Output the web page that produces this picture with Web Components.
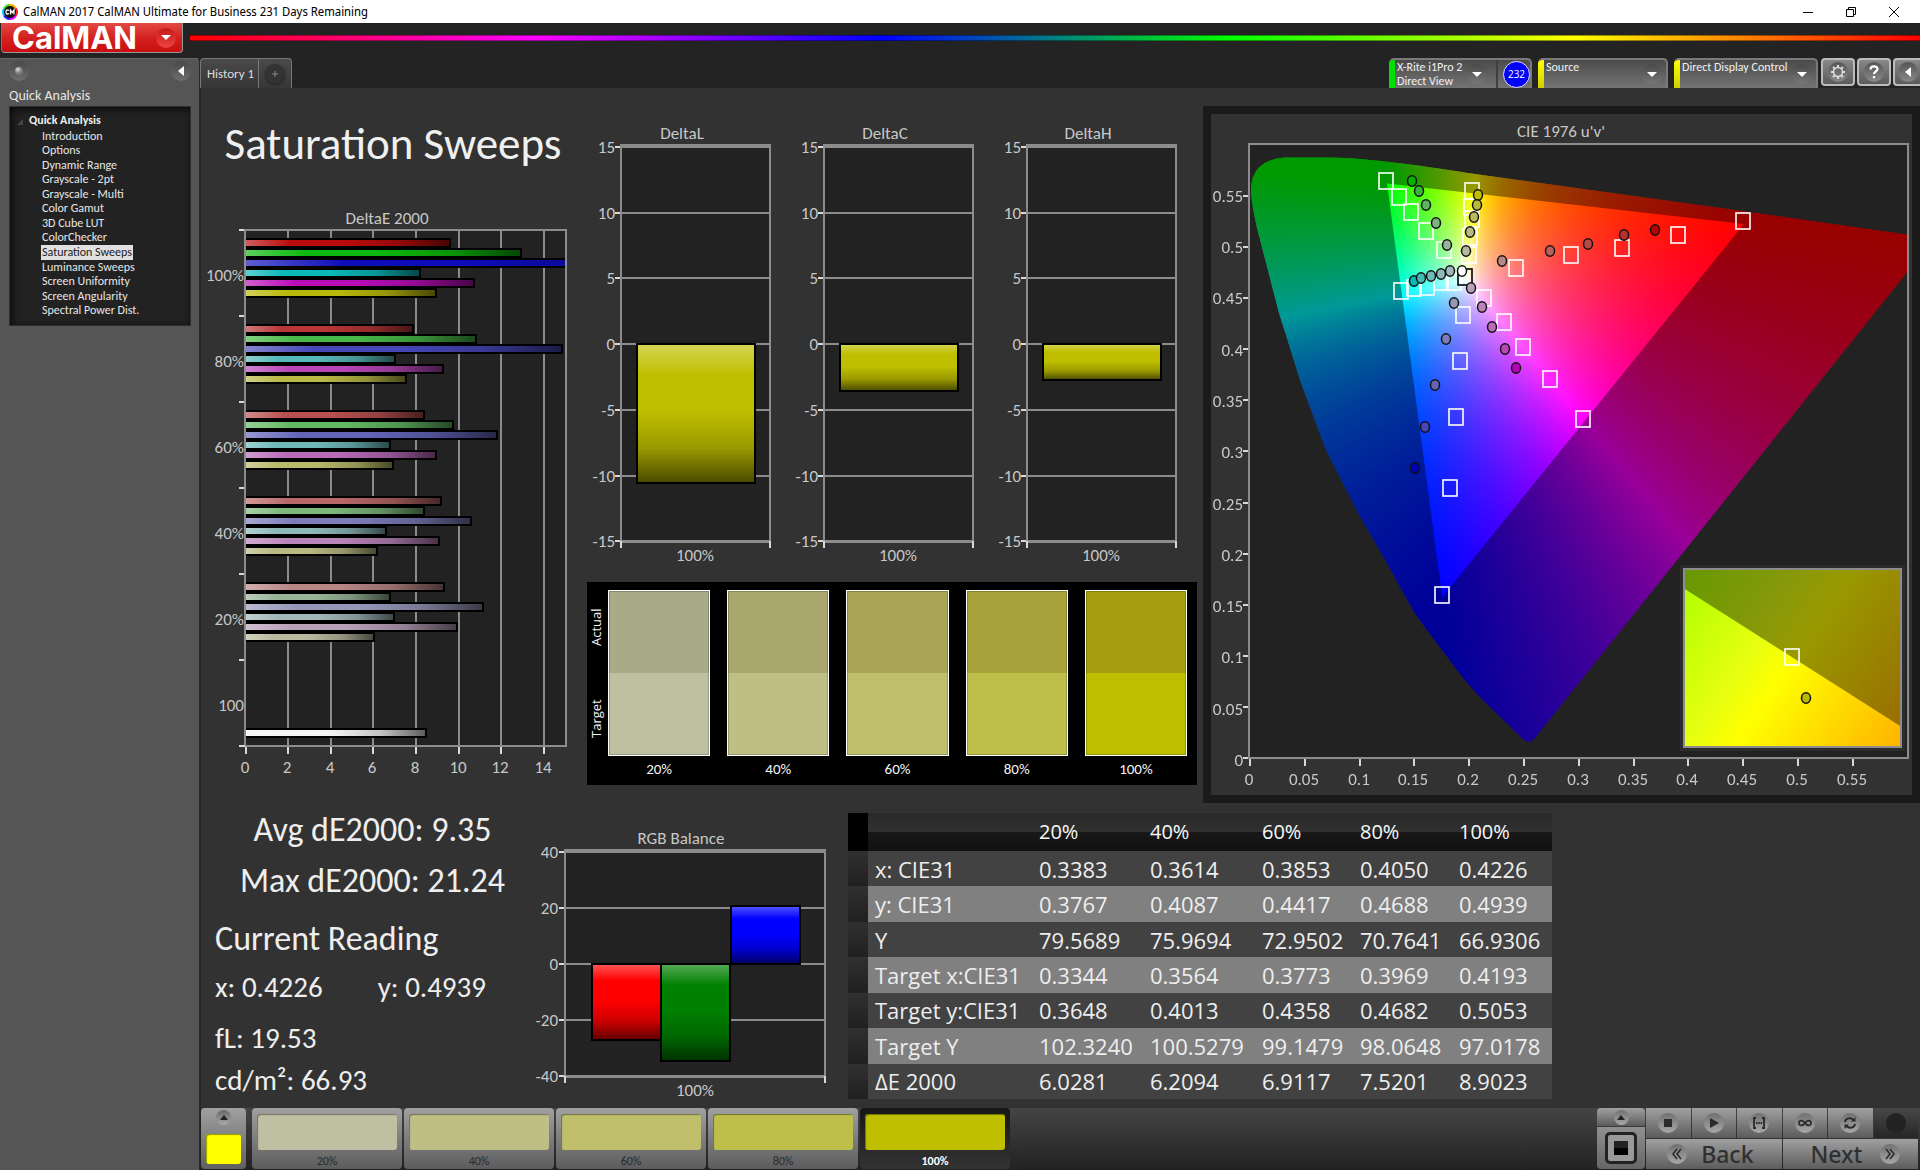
<!DOCTYPE html>
<html lang="en">
<head>
<meta charset="utf-8">
<title>CalMAN 2017 CalMAN Ultimate for Business</title>
<style>
html, body { margin: 0; height: 100%; background: #232323; }
body { font-family: Carlito, Calibri, Lato, sans-serif; color: #e6e6e6; overflow: hidden; }
</style>
</head>
<body>
<calman-app></calman-app>
<script>
const HUM = 'Carlito, Calibri, Lato, sans-serif';
const UI = '"Open Sans", "Noto Sans", sans-serif';
const RESET = `*{box-sizing:border-box} button{font:inherit;color:inherit;border:0;margin:0;padding:0;cursor:pointer;text-align:left} a{color:inherit;text-decoration:none}`;
const define = (name, render, after) => customElements.define(name, class extends HTMLElement {
  connectedCallback() {
    if (this.shadowRoot) return;
    const root = this.attachShadow({ mode: 'open' });
    const t = document.createElement('template');
    const out = render(this);
    t.innerHTML = `<style>${RESET}${out.css}</style>${out.html}`;
    root.append(t.content.cloneNode(true));
    if (after) after(root, this);
  }
});

/* ---------- window title ---------- */
define('window-title', () => ({
  css: `:host{display:flex;align-items:center;height:23px;background:#fff;color:#000;font:12px "Noto Sans Display",${UI};padding-left:2px}
  h1{font:inherit;margin:0 0 0 5px;flex:1}
  button{background:none;width:43px;height:23px;display:grid;place-items:center} button:last-of-type{margin-right:5px}`,
  html: `<svg width="16" height="16" viewBox="0 0 16 16"><circle cx="8" cy="8" r="7" fill="#111"/>
    <g fill="none" stroke-width="2"><path d="M8 1a7 7 0 0 1 6 3.500" stroke="#fa0"/><path d="M14 4.500a7 7 0 0 1 0 7" stroke="#f22"/><path d="M14 11.500a7 7 0 0 1-6 3.500" stroke="#e0f"/><path d="M8 15a7 7 0 0 1-6-3.500" stroke="#22f"/><path d="M2 11.500a7 7 0 0 1 0-7" stroke="#0cf"/><path d="M2 4.500A7 7 0 0 1 8 1" stroke="#4d2"/></g>
    <path d="M7 6.500Q4 5 4 8t3 1.500M8.500 10.500V6l1.700 2.500L12 6v4.500" fill="none" stroke="#fff" stroke-width="1.300"/></svg>
  <h1>CalMAN 2017 CalMAN Ultimate for Business 231 Days Remaining</h1>
  <button aria-label="Minimize"><svg width="12" height="12"><path d="M1 6.500h10" stroke="#000"/></svg></button>
  <button aria-label="Restore"><svg width="12" height="12" fill="none" stroke="#000"><path d="M1.500 3.500h7v7h-7zM3.500 3V1.500h7v7H9"/></svg></button>
  <button aria-label="Close"><svg width="12" height="12" fill="none" stroke="#000"><path d="M1 1l10 10M11 1L1 11"/></svg></button>`
}));

/* ---------- brand strip ---------- */
define('brand-strip', () => ({
  css: `:host{display:flex;height:35px;background:#232323}
  .logo{display:flex;align-items:center;width:182px;height:30px;margin-left:1px;padding:0 6px 0 10px;background:linear-gradient(#e34a45,#d4211f 50%,#c80f0f);border:1px solid #999;border-top:0;border-left-color:#777;border-radius:0 0 4px 4px;color:#fff}
  b{flex:1;font:700 31px/28px Inter,sans-serif}
  i{display:grid;place-items:center;width:20px;height:20px;border-radius:50%;background:linear-gradient(#c41a1a,#e44)}
  .line{flex:1;height:6px;margin:12px 0 0 7px;background:linear-gradient(90deg,#f00,#f0f 20%,#00f 40%,#0f0 60%,#ff0 80%,#f00);border-top:1px solid #0006;border-bottom:1px solid #0006}`,
  html: `<button class="logo"><b>CalMAN</b><i><svg width="10" height="5"><path d="M0 0h10L5 5z" fill="#fff"/></svg></i></button><div class="line"></div>`
}));

/* ---------- workflow tree ---------- */
const PAGES = ['Introduction','Options','Dynamic Range','Grayscale - 2pt','Grayscale - Multi','Color Gamut','3D Cube LUT','ColorChecker','Saturation Sweeps','Luminance Sweeps','Screen Uniformity','Screen Angularity','Spectral Power Dist.'];
define('workflow-panel', () => ({
  css: `:host{display:block;width:200px;background:#555;border-top:1px solid #666;border-right:1px solid #2a2a2a;border-radius:0 4px 0 0;padding:2px 8px 0 9px}
  .top{display:flex;justify-content:space-between;height:22px}
  .top button{width:20px;height:20px;border-radius:50%;background:linear-gradient(#484848,#6e6e6e);display:grid;place-items:center}
  h2{font:14px/20px ${HUM};margin:3px 0 0;height:20px}
  nav{height:220px;background:#222;border:1px solid #2f2f2f;box-shadow:inset 2px 2px 8px #000b;padding:6px 0 7px 19px;font-size:12px;display:flex;flex-direction:column}
  strong{line-height:15px;height:16px;position:relative;color:#f0f0f0}
  strong svg{position:absolute;left:-12px;top:6px}
  ul{list-style:none;margin:0;padding:0 0 0 12px;flex:1;min-height:0;display:flex;flex-direction:column}
  li{flex:1;display:flex;align-items:center;min-height:0}
  a{padding:0 1px;line-height:15px} a.on{background:#e0e0e0;color:#222}`,
  html: `<div class="top"><button aria-label="Pin"><svg width="10" height="10"><defs><radialGradient id="g" cx=".35" cy=".3"><stop stop-color="#ddd"/><stop offset="1" stop-color="#777"/></radialGradient></defs><circle cx="5" cy="5" r="4" fill="url(#g)"/></svg></button>
  <button aria-label="Collapse"><svg width="6" height="10"><path d="M6 0v10L0 5z" fill="#fff"/></svg></button></div>
  <h2>Quick Analysis</h2>
  <nav><strong><svg width="6" height="6"><path d="M6 0v6H0z" fill="#444"/></svg>Quick Analysis</strong><ul>${PAGES.map(p => `<li><a href="#" ${p === 'Saturation Sweeps' ? 'class="on" aria-current="page"' : ''}>${p}</a></li>`).join('')}</ul></nav>`
}));

/* ---------- tabs and device bar ---------- */
define('device-button', el => {
  const count = el.getAttribute('count');
  return {
  css: `:host{display:flex;height:30px}
  .b{flex:1;display:flex;background:linear-gradient(#4b4b4b,#747474);border:2px solid #7a7a7a;border-bottom:0;border-left:0;border-radius:5px 5px 0 0;overflow:hidden;font:12px/14px ${HUM};color:#f0f0f0}
  .b::before{content:"";width:6px;background:${el.getAttribute('tone')}}
  .t{flex:1;padding-left:2px;white-space:nowrap}
  i{align-self:center;width:20px;height:20px;margin:0 ${count ? 9 : 4}px 0 0;border-radius:50%;background:linear-gradient(#484848,#787878);display:grid;place-items:center}
  .n{display:grid;align-items:center;justify-items:end;width:34px;border-left:2px solid #404040}
  .n span{display:grid;place-items:center;width:27px;height:27px;border-radius:50%;background:#00f;border:1px solid #ddf;font:10px/12px ${UI};color:#fff}
  ::slotted(*){display:block}`,
  html: `<button class="b" aria-haspopup="menu"><span class="t"><slot></slot></span><i><svg width="10" height="5"><path d="M0 0h10L5 5z" fill="#fff"/></svg></i>${count ? `<span class="n"><span>${count}</span></span>` : ''}</button>`
}; });
define('tab-bar', () => ({
  css: `:host{display:flex;height:30px;background:#232323}
  .tab,.add{height:30px;background:linear-gradient(#4a4a4a,#363636);border:1px solid #777;border-bottom:0;font-size:13px;color:#ddd}
  .tab{width:59px;border-radius:4px 0 0 0;padding-left:6px}
  .add{width:33px;border-left:0;border-radius:0 4px 0 0;display:grid;place-items:center}
  .add i{width:20px;height:20px;border-radius:50%;background:#333;display:grid;place-items:center;box-shadow:0 1px 2px #222}
  .gap{flex:1}
  device-button{margin-right:6px}
  .sq{width:34px;height:28px;margin-left:2px;border:2px solid #bbb;border-radius:4px;background:linear-gradient(#888,#5b5b5b);display:grid;place-items:center}
  .sq i{width:20px;height:20px;border-radius:50%;background:linear-gradient(#555,#8a8a8a);display:grid;place-items:center}
  .last{width:27px;border-right:0;border-radius:4px 0 0 4px}`,
  html: `<button class="tab">History 1</button><button class="add" aria-label="New history"><i><svg width="8" height="8"><path d="M4 1v6M1 4h6" stroke="#888"/></svg></i></button><div class="gap"></div>
  <device-button tone="#00e000" count="232" style="width:143px"><span>X-Rite i1Pro 2</span><span>Direct View</span></device-button>
  <device-button tone="linear-gradient(#ff0,#d0d000)" style="width:130px"><span>Source</span></device-button>
  <device-button tone="linear-gradient(#ff0,#d0d000)" style="width:144px;margin-right:1px"><span>Direct Display Control</span></device-button>
  <button class="sq" aria-label="Settings"><i><svg width="16" height="16" viewBox="0 0 16 16" fill="none" stroke="#ddd"><circle cx="8" cy="8" r="4.500" stroke-width="1.500"/><g stroke-width="2"><path d="M8 1v2M8 13v2M1 8h2M13 8h2M3 3l1.500 1.500M11.500 11.500L13 13M13 3l-1.500 1.500M4.500 11.500L3 13"/></g></svg></i></button>
  <button class="sq" aria-label="Help"><i><svg width="12" height="14" viewBox="0 0 12 14"><path d="M2.500 4.500C2.500 0.500 9.500 0.500 9.500 4c0 2.500-3.500 2.500-3.500 5M6 11v2.200" fill="none" stroke="#fff" stroke-width="2.200"/></svg></i></button>
  <button class="sq last" aria-label="Expand"><i><svg width="6" height="10"><path d="M6 0v10L0 5z" fill="#fff"/></svg></i></button>`
}));

/* ---------- charts ---------- */
const SVG_CSS = `:host{display:block} svg{display:block;width:100%;height:auto} text{font-family:${HUM};font-size:17px;fill:#c8c8c8} .e{text-anchor:end} .m{text-anchor:middle}
 .ax{stroke:#8c8c8c;stroke-width:2;fill:none} .tk{stroke:#d8d8d8;stroke-width:2}`;
const shade = (id, dir) => `<linearGradient id="${id}" x1="0" y1="0" x2="${dir === 'h' ? 1 : 0}" y2="${dir === 'h' ? 0 : 1}"><stop stop-color="#fff" stop-opacity=".34"/><stop offset=".22" stop-color="#fff" stop-opacity="0"/><stop offset=".48" stop-color="#000" stop-opacity="0"/><stop offset=".75" stop-color="#000" stop-opacity=".2"/><stop offset="1" stop-color="#000" stop-opacity=".62"/></linearGradient>`;
const bar = (x, y, w, h, c, g) => `<rect x="${x}" y="${y}" width="${w}" height="${h}" fill="${c}"/><rect x="${x}" y="${y}" width="${w}" height="${h}" fill="url(#${g})" stroke="#000" stroke-width="2"/>`;

const SWEEPS = [
  ['100%', [9.6,12.9,21.24,8.15,10.7,8.9], ['#b90c0c','#0cb90c','#0c0cb9','#0cb9b9','#b90cb9','#b9b90c']],
  ['80%', [7.85,10.8,14.85,7,9.25,7.5], ['#b93636','#46b946','#4646b9','#56b9b9','#b946b9','#b9b946']],
  ['60%', [8.35,9.7,11.8,6.75,8.9,6.9], ['#b95050','#62b962','#6464b9','#70b9b9','#b96ab9','#b9b96a']],
  ['40%', [9.15,8.35,10.55,6.55,9.05,6.15], ['#b96868','#7cb97c','#7c7cb9','#8fb9b9','#b984b9','#b9b984']],
  ['20%', [9.3,6.75,11.15,6.95,9.9,6.03], ['#b98686','#98b498','#9696b9','#a2b9b9','#b9a0b9','#b9b9a0']],
  ['100', [0,0,0,0,0,0,8.45], ['','','','','','','#f4f4f4']]
];
define('delta-e-chart', () => {
  let s = '';
  for (let i = 2; i <= 14; i += 2) { const x = Math.round(245.5 + i * 21.3); s += `<path class="ax" d="M${x} 230V746"/>`; }
  for (let i = 0; i <= 14; i += 2) { const x = Math.round(245.5 + i * 21.3); s += `<path class="tk" d="M${x} 747v7"/><text class="m" x="${x - 1}" y="773">${i}</text>`; }
  SWEEPS.forEach(([name, vals, cols], g) => {
    const y = 230 + g * 86;
    s += `<path class="tk" d="M239 ${y}h6"/><text class="e" x="244" y="${y + 51}">${name}</text>`;
    vals.forEach((v, k) => { if (v) s += bar(245, y + 9 + k * 10, Math.round(v * 21.3) + 1, 8, cols[k], 'b'); });
  });
  return { css: SVG_CSS, html: `<svg viewBox="200 200 380 590" role="img" aria-label="DeltaE 2000"><defs>${shade('b', 'h')}<clipPath id="c"><rect x="200" y="220" width="366" height="570"/></clipPath></defs>
  <text class="m" x="387" y="224">DeltaE 2000</text><rect x="246" y="230" width="320" height="516" fill="#222"/><g clip-path="url(#c)">${s}</g><rect class="ax" x="245" y="230" width="321" height="516"/><path class="tk" d="M239 746h6"/></svg>` };
});

define('delta-chart', el => {
  const v = +el.getAttribute('value'), name = el.getAttribute('name');
  let s = '';
  for (let i = 15; i >= -15; i -= 5) { const y = Math.round(344 - i * 13.15); s += `<path class="ax" d="M41 ${y}H190"/><path class="tk" d="M35 ${y}h6"/><text class="e" x="35" y="${y + 6}">${i}</text>`; }
  return { css: SVG_CSS, html: `<svg viewBox="0 110 203 460" role="img" aria-label="${name}"><defs>${shade('b', 'v')}</defs>
  <text class="m" x="102" y="139">${name}</text><rect x="41" y="145" width="149" height="396" fill="#222"/>${s}<rect class="ax" x="41" y="145" width="149" height="397"/><path class="tk" d="M41 541v7M190 541v7"/>
  ${bar(57, 344, 118, Math.round(-v * 13.13), '#bfbf00', 'b')}<text class="m" x="115" y="561">100%</text></svg>` };
});

define('rgb-chart', () => {
  let s = '';
  for (let i = 40; i >= -40; i -= 20) { const y = 964 - i * 14 / 5; s += `<path class="ax" d="M565 ${y}H825"/><path class="tk" d="M559 ${y}h6"/><text class="e" x="558" y="${y + 6}">${i}</text>`; }
  return { css: SVG_CSS, html: `<svg viewBox="535 815 300 290" role="img" aria-label="RGB Balance"><defs>${shade('b', 'v')}</defs>
  <text class="m" x="681" y="844">RGB Balance</text><rect x="565" y="850" width="260" height="226" fill="#222"/>${s}<rect class="ax" x="565" y="850" width="260" height="227"/><path class="tk" d="M565 1076v7M825 1076v7"/>
  ${bar(592, 964, 69, 76, '#f00', 'b')}${bar(661, 964, 69, 97, '#008000', 'b')}${bar(731, 906, 69, 58, '#00f', 'b')}<text class="m" x="695" y="1096">100%</text></svg>` };
});

/* ---------- chromaticity diagram ---------- */
/* colour of every pixel for the window (u0, v0) top-left with kx, ky pixels per unit */
function chroma(w, h, u0, v0, kx, ky) {
  const c = document.createElement('canvas'); c.width = w; c.height = h;
  const g = c.getContext('2d'), im = g.createImageData(w, h), d = im.data;
  for (let j = 0, p = 0; j < h; j++) for (let i = 0; i < w; i++, p += 4) {
    const u = u0 + i / kx, v = Math.max(v0 - j / ky, 0.002);
    const X = 9 * u / (4 * v), Z = (12 - 3 * u - 20 * v) / (4 * v);
    const r = Math.max(0, 3.2406 * X - 1.5372 - .4986 * Z), gr = Math.max(0, -.9689 * X + 1.8758 + .0415 * Z), b = Math.max(0, .0557 * X - .204 + 1.057 * Z);
    const m = 255 / Math.max(r, gr, b, 1e-6);
    d[p] = r * m; d[p + 1] = gr * m; d[p + 2] = b * m; d[p + 3] = 255;
  }
  g.putImageData(im, 0, 0);
  return c;
}
/* yellow corner of the gamut for the magnified view */
function yellowField(w, h) {
  const c = document.createElement('canvas'); c.width = w; c.height = h;
  const g = c.getContext('2d'), l = g.createLinearGradient(0, 0, 232, 157);
  [[0, '#aaff00'], [.36, '#e6ff10'], [.5, '#ffff00'], [1, '#ffb200']].forEach(s => l.addColorStop(...s));
  g.fillStyle = l; g.fillRect(0, 0, w, h);
  return c;
}
const TARGETS = [[1386,181],[1399,197],[1411,212],[1426,231],[1444,250],[1472,191],[1471,207],[1472,219],[1470,237],[1469,255],[1516,268],[1571,255],[1622,248],[1678,235],[1743,221],[1401,291],[1414,288],[1427,287],[1441,282],[1454,282],[1484,298],[1504,322],[1523,347],[1550,379],[1583,419],[1463,315],[1460,361],[1456,417],[1450,488],[1442,595]];
const ACTUALS = [
  ['#00b400',1412,181],['#3cb43c',1419,191],['#5cb45c',1426,205],['#7cb47c',1436,223],['#98b498',1447,245],
  ['#bfbf00',1478,195],['#b9b93c',1477,205],['#b9b960',1474,217],['#b9b984',1470,232],['#b9b9a0',1466,251],
  ['#b98686',1502,261],['#b96060',1550,251],['#b94848',1588,244],['#b93030',1624,235],['#b90000',1655,230],
  ['#00b9b9',1414,281],['#46b9b9',1421,278],['#70b9b9',1431,276],['#8fb9b9',1441,274],['#a2b9b9',1450,271],['#ffffff',1462,271],
  ['#b9a0b9',1471,288],['#b984b9',1482,307],['#b96ab9',1492,327],['#b946b9',1505,349],['#b900b9',1516,368],
  ['#9696b9',1454,303],['#7c7cb9',1446,339],['#6464b9',1435,385],['#4646b9',1425,427],['#0000b9',1415,468]];
define('cie-chart', () => {
  let s = '';
  for (let i = 0; i <= 11; i++) {
    const t = String(i * 5 / 100), x = Math.round(1250 + i * 54.8), y = Math.round(758 - i * 51.1);
    s += `<path class="tk" d="M${x} 759v7M1243 ${y}h6"/><text class="m" x="${x - 1}" y="785">${t}</text><text class="e" x="1243" y="${Math.round(766 - i * 51.3)}">${t}</text>`;
  }
  const sq = (x, y, c) => `<rect x="${x - 7}" y="${y - 8}" width="14" height="16" fill="none" stroke="${c}" stroke-width="1.600"/>`;
  const dot = (c, x, y) => `<ellipse cx="${x}" cy="${y}" rx="4.500" ry="5.200" fill="${c}" stroke="#111" stroke-width="1.500"/>`;
  return { css: SVG_CSS + `:host{border:8px solid #1a1a1a;background:#323232}canvas{display:block}`, html: `<svg viewBox="1211 114 701 681" role="img" aria-label="CIE 1976 u'v'"><text class="m" x="1561" y="137">CIE 1976 u'v'</text>
  <foreignObject x="1250" y="144" width="658" height="614"><canvas class="big" width="658" height="614"></canvas></foreignObject>${s}
  <rect class="ax" x="1249" y="144" width="659" height="614"/>
  ${TARGETS.map(([x, y]) => sq(x, y, '#fff')).join('')}${sq(1465, 277, '#000')}${ACTUALS.map(a => dot(...a)).join('')}
  <rect x="1680" y="565" width="225" height="186" fill="#2c2c2c"/><foreignObject x="1684" y="569" width="217" height="178"><canvas class="zoom" width="217" height="178"></canvas></foreignObject>
  <rect class="ax" x="1684" y="569" width="217" height="178"/>${sq(1792, 657, '#fff')}${dot('#b9b900', 1806, 698)}</svg>` };
}, root => {
  const draw = (cv, img, locus, tri) => {
    const g = cv.getContext('2d');
    g.fillStyle = '#222'; g.fillRect(0, 0, cv.width, cv.height);
    g.save(); if (locus) g.clip(locus);
    g.drawImage(img, 0, 0); g.fillStyle = 'rgba(0,0,0,.4)'; g.fillRect(0, 0, cv.width, cv.height); g.restore();
    g.save(); g.clip(tri); g.drawImage(img, 0, 0); g.restore();
  };
  const locus = new Path2D('M1285 157.500H1330C1370 158 1430 167 1475 174L1728 209L1916 236V261L1534 739Q1529 744 1523 739L1485 702Q1463 680 1446 655Q1428 632 1414 612L1384 558L1358 513L1326 450L1301 383L1279 313L1257 228Q1252 206 1251 192Q1250 160 1285 157.500Z');
  const p = new Path2D(); p.addPath(locus, new DOMMatrix([1, 0, 0, 1, -1250, -144]));
  const prim = [[.4507, .5229], [.125, .5625], [.1754, .1579]];
  const tri = (u0, v0, kx, ky) => { const t = new Path2D(); prim.forEach(([u, v], i) => t[i ? 'lineTo' : 'moveTo']((u - u0) * kx, (v0 - v) * ky)); t.closePath(); return t; };
  const A = [0, .6012, 1096, 1022], B = [.1643, .5591, 2724, 14236];
  draw(root.querySelector('.big'), chroma(658, 614, ...A), p, tri(...A));
  draw(root.querySelector('.zoom'), yellowField(217, 178), null, tri(...B));
});

/* ---------- actual / target swatches ---------- */
define('swatch-panel', () => ({
  css: `:host{display:flex;background:#000;padding:8px 10px 0 2px;height:203px;color:#f4f4f4}
  .v{width:19px;height:166px;display:flex;flex-direction:column;justify-content:space-between;align-items:flex-start;font:500 13px/14px ${UI}}
  .v span{writing-mode:vertical-rl;transform:rotate(180deg);height:74px;text-align:center}
  .r{flex:1;display:flex;gap:17px} figure{flex:1;margin:0}
  .c{height:166px;border:1px solid #fff;outline:1px solid #0003;outline-offset:-2px}
  figcaption{text-align:center;font:15px/27px ${HUM}}`,
  html: `<div class="v"><span>Actual</span><span>Target</span></div><div class="r">${[['20%','#a7ab88','#bfbfa2'],['40%','#a9a76e','#bfbe85'],['60%','#a8a555','#bfbe6b'],['80%','#a8a33a','#bebf4b'],['100%','#a79d12','#bfbf00']].map(([n, a, t]) => `<figure><div class="c" style="background:linear-gradient(${a} 50%,${t} 50%)"></div><figcaption>${n}</figcaption></figure>`).join('')}</div>`
}));

/* ---------- readings ---------- */
define('reading-block', () => ({
  css: `:host{display:block;padding:1px 5px 0 15px;color:#eee;font-family:${HUM};white-space:nowrap}
  p,h3{margin:0;font-weight:400} .a{font-size:34px;line-height:51px;text-align:center} h3{font-size:34px;line-height:66px}
  .xy{display:flex;gap:55px} .s{font-size:29px;line-height:30px} .l{font-size:29px;line-height:42px} .xy+.l{margin-top:15px}`,
  html: `<p class="a">Avg dE2000: 9.35</p><p class="a">Max dE2000: 21.24</p><h3>Current Reading</h3><div class="xy s"><span>x: 0.4226</span><span>y: 0.4939</span></div><p class="l">fL: 19.53</p><p class="l">cd/m²: 66.93</p>`
}));

/* ---------- data table ---------- */
const ROWS = [['x: CIE31','0.3383','0.3614','0.3853','0.4050','0.4226'],['y: CIE31','0.3767','0.4087','0.4417','0.4688','0.4939'],['Y','79.5689','75.9694','72.9502','70.7641','66.9306'],['Target x:CIE31','0.3344','0.3564','0.3773','0.3969','0.4193'],['Target y:CIE31','0.3648','0.4013','0.4358','0.4682','0.5053'],['Target Y','102.3240','100.5279','99.1479','98.0648','97.0178'],['ΔE 2000','6.0281','6.2094','6.9117','7.5201','8.9023']];
define('data-table', () => ({
  css: `:host{display:block} table{border-collapse:collapse;width:704px;height:286px;table-layout:fixed;font:22px/32px ${UI};color:#eee}
  th,td{padding:0 0 0 7px;text-align:left;font-weight:400;white-space:nowrap}
  thead tr{height:38px} thead th{font:500 20px/34px ${UI};background:linear-gradient(#2a2a2a,#303030 50%,#181818 50%,#111);color:#f8f8f8}
  thead td{background:#000} tbody tr{background:#424242} tbody tr:nth-child(even){background:#808080}
  tbody td:first-child{background:linear-gradient(#303030,#202020);padding:0}`,
  html: `<table><colgroup>${[20,164,111,112,98,99,100].map(w => `<col style="width:${w}px">`).join('')}</colgroup><thead><tr><td></td><th></th>${['20%','40%','60%','80%','100%'].map(h => `<th scope="col">${h}</th>`).join('')}</tr></thead><tbody>${ROWS.map(r => `<tr><td></td><th scope="row">${r[0]}</th>${r.slice(1).map(c => `<td>${c}</td>`).join('')}</tr>`).join('')}</tbody></table>`
}));

/* ---------- footer ---------- */
const ICONS = {
  Stop: '<rect x="4" y="4" width="8" height="8" fill="#2a2a2a"/>',
  Play: '<path d="M4 3l9 5-9 5z" fill="#2a2a2a"/>',
  Range: '<path d="M5 3H3v10h2M11 3h2v10h-2M5 8h1.500M7.300 8h1.500M9.600 8h1.500" fill="none" stroke="#2a2a2a" stroke-width="1.800"/>',
  Continuous: '<path d="M8 8C6 5 2 4.500 2 8s4 3 6 0 6-3.500 6 0-4 3-6 0z" fill="none" stroke="#2a2a2a" stroke-width="1.700"/>',
  Refresh: '<path d="M3 7c.5-4 6-5 8.500-2M13 9c-.5 4-6 5-8.500 2" fill="none" stroke="#2a2a2a" stroke-width="2"/><path d="M13.500 2v4.500H9zM2.500 14V9.500H7z" fill="#2a2a2a"/>'
};
const icon = n => `<i><svg width="16" height="16">${ICONS[n]}</svg></i>`;
define('foot-bar', () => ({
  css: `:host{display:flex;height:62px;background:linear-gradient(#444,#222);border-left:1px solid #222;padding:0 2px 1px 0}
  button{background:linear-gradient(#a0a0a0,#5c5c5c)}
  i{width:20px;height:20px;border-radius:50%;background:linear-gradient(#707070,#a8a8a8);display:grid;place-items:center;flex:none}
  .cur{width:45px;border-radius:4px;display:flex;flex-direction:column;align-items:center;margin-right:6px;background:linear-gradient(#a0a0a0,#606060);padding-top:2px}
  .cur i{width:15px;height:15px;background:linear-gradient(#666,#aaa)} .cur b{width:35px;height:30px;background:#ff0;border-radius:3px;margin-top:9px;box-shadow:inset 1px 1px 1px #0006}
  .card{width:150px;margin-right:2px;border-radius:4px;padding:5px 5px 0;text-align:center;font:12px/16px ${HUM};color:#2b2b2b}
  .card b{display:block;height:36px;border-radius:3px;box-shadow:inset 1px 1px 1px #0006;margin-bottom:3px}
  .card.on{background:linear-gradient(#171717,#333);color:#fff;font-weight:700}
  .gap{flex:1}
  .st{width:48px;display:flex;flex-direction:column;margin-right:1px;border-radius:4px;overflow:hidden;gap:1px}
  .st .u{height:18px;display:grid;place-items:center} .st .u i{width:15px;height:15px} .st .d{flex:1;display:grid;place-items:center;background:linear-gradient(#909090,#666)}
  .sq{width:32px;height:32px;border:3px solid #222;border-radius:5px;background:#999;display:grid;place-items:center} .sq b{width:14px;height:14px;background:linear-gradient(#222 50%,#000 50%)}
  .g{display:grid;grid-template-columns:repeat(6,1fr);grid-template-rows:30px 30px;gap:1px;width:272px}
  .g button{display:grid;place-items:center} .g .off{background:linear-gradient(#484848,#262626)} .off i{background:#222}
  .g .nav{grid-column:span 3;display:flex;align-items:center;font:500 23px/30px "Noto Sans",${UI};color:#303030;justify-content:space-between;padding:0 28px 0 21px}
  .g .nav.n{padding:0 18px 0 28px}`,
  html: `<button class="cur" aria-label="Current color"><i><svg width="8" height="5"><path d="M0 5h8L4 0z" fill="#222"/></svg></i><b></b></button>
  ${[['20%','#bfbfa2'],['40%','#bfbe85'],['60%','#bfbe6b'],['80%','#bebf4b'],['100%','#bfbf00']].map(([n, c], k) => `<button class="card${k === 4 ? ' on' : ''}"><b style="background:${c}"></b>${n}</button>`).join('')}
  <div class="gap"></div>
  <div class="st"><button class="u" aria-label="More"><i><svg width="8" height="5"><path d="M0 5h8L4 0z" fill="#222"/></svg></i></button><button class="d" aria-label="Pattern"><span class="sq"><b></b></span></button></div>
  <div class="g">${Object.keys(ICONS).map(n => `<button aria-label="${n}">${icon(n)}</button>`).join('')}<button class="off" aria-label="Record" disabled><i></i></button>
  <button class="nav"><i><svg width="12" height="12" fill="none" stroke="#2a2a2a" stroke-width="1.500"><path d="M6 1L2 6l4 5M10 1L6 6l4 5"/></svg></i>Back</button>
  <button class="nav n">Next<i><svg width="12" height="12" fill="none" stroke="#2a2a2a" stroke-width="1.500"><path d="M2 1l4 5-4 5M6 1l4 5-4 5"/></svg></i></button></div>`
}));

/* ---------- page ---------- */
define('sweeps-page', () => ({
  css: `:host{display:block;background:#323232;border-left:1px solid #262626;overflow:hidden}
  .top{display:grid;grid-template-columns:380fr 623fr 717fr;align-items:start;margin-left:-1px}
  h2{margin:0;font:45px/112px ${HUM};color:#f0f0f0;text-align:center;padding-left:6px;white-space:nowrap}
  .mid{padding:22px 0 0} .three{display:grid;grid-template-columns:repeat(3,1fr);margin-right:14px}
  swatch-panel{margin:12px 6px 0 7px} cie-chart{margin-top:18px}
  .low{display:grid;grid-template-columns:335fr 300fr 1085fr;align-items:start;margin-left:-1px}
  rgb-chart{margin-top:12px} data-table{margin:10px 0 0 13px}`,
  html: `<section class="top"><div><h2>Saturation Sweeps</h2><delta-e-chart></delta-e-chart></div>
  <div class="mid"><div class="three"><delta-chart name="DeltaL" value="-10.6"></delta-chart><delta-chart name="DeltaC" value="-3.6"></delta-chart><delta-chart name="DeltaH" value="-2.75"></delta-chart></div><swatch-panel></swatch-panel></div>
  <cie-chart></cie-chart></section>
  <section class="low"><reading-block></reading-block><rgb-chart></rgb-chart><data-table></data-table></section>`
}));
define('calman-app', () => ({
  css: `:host{display:flex;flex-direction:column;min-height:100vh} .w{flex:1;display:flex;min-height:0} .r{flex:1;min-width:0;display:flex;flex-direction:column} sweeps-page{flex:1}`,
  html: `<window-title></window-title><brand-strip></brand-strip><div class="w"><workflow-panel></workflow-panel><div class="r"><tab-bar></tab-bar><sweeps-page></sweeps-page><foot-bar></foot-bar></div></div>`
}));
</script>
</body>
</html>
